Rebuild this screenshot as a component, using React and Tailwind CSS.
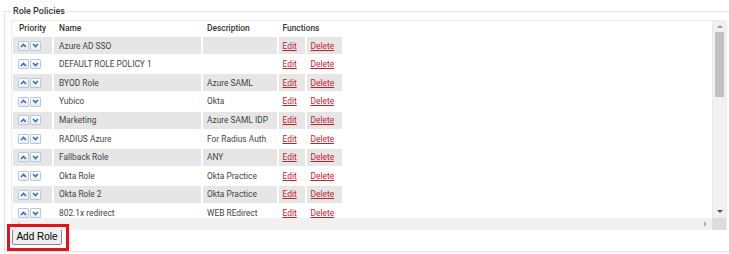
import React from 'react';

const roles = [
    { name: 'Azure AD SSO', desc: '' },
    { name: 'DEFAULT ROLE POLICY 1', desc: '' },
    { name: 'BYOD Role', desc: 'Azure SAML' },
    { name: 'Yubico', desc: 'Okta' },
    { name: 'Marketing', desc: 'Azure SAML IDP' },
    { name: 'RADIUS Azure', desc: 'For Radius Auth' },
    { name: 'Fallback Role', desc: 'ANY' },
    { name: 'Okta Role', desc: 'Okta Practice' },
    { name: 'Okta Role 2', desc: 'Okta Practice' },
    { name: '802.1x redirect', desc: 'WEB REdirect' },
];

const Chevron = ({ up }) => (
    <svg width="7" height="5" viewBox="0 0 7 5">
        <polyline
            points={up ? '1,4 3.5,1.5 6,4' : '1,1 3.5,3.5 6,1'}
            fill="none"
            stroke="#2f6fc4"
            strokeWidth="1.6"
        />
    </svg>
);

const MoveButton = ({ up }) => (
    <span className="w-[11px] h-[10px] flex items-center justify-center border border-[#b9c9da] bg-gradient-to-b from-white to-[#e9eef4] rounded-[1px]">
        <Chevron up={up} />
    </span>
);

const RoleRow = ({ role, index }) => {
    const cell = index % 2 === 0 ? 'bg-[#e6e6e6]' : 'bg-white';
    return (
        <div className="flex gap-[2px] h-[17px] shrink-0">
            <div className={`${cell} w-[39px] flex items-center gap-[1px] pl-[5px]`}>
                <MoveButton up />
                <MoveButton />
            </div>
            <div className={`${cell} w-[147px] flex items-center pl-[5px] text-[#444]`}>{role.name}</div>
            <div className={`${cell} w-[74px] flex items-center pl-[4px] text-[#444]`}>{role.desc}</div>
            <div className={`${cell} w-[26px] flex items-center pl-[3.5px]`}>
                <span className="text-[#c3202b] underline underline-offset-[1px]">Edit</span>
            </div>
            <div className={`${cell} w-[35px] flex items-center pl-[3.5px]`}>
                <span className="text-[#c3202b] underline underline-offset-[1px]">Delete</span>
            </div>
        </div>
    );
};

const App = () => {
    return (
        <div className="w-[729px] h-[254px] bg-white overflow-hidden relative" style={{ fontFamily: 'Roboto, "Liberation Sans", sans-serif' }}>
            <fieldset className="ml-[4px] mt-[5px] w-[730px] h-[247px] border border-r-0 border-[#e3e3e3] pl-[6px]">
                <legend className="px-[2px] text-[9px] leading-[12px] font-medium text-[#333]">Role Policies</legend>

                <div className="mt-[3px] w-[716px] border border-b-0 border-[#ececec]">
                    <div className="flex h-[197px]">
                        <div className="w-[700px] pl-[1px] overflow-hidden text-[8.4px] leading-none">
                            <div className="flex flex-col gap-[1.6px]">
                                <div className="flex gap-[2px] h-[14.7px] shrink-0 items-center font-medium text-[#333]">
                                    <div className="w-[39px] pl-[6px]">Priority</div>
                                    <div className="w-[147px] pl-[5px]">Name</div>
                                    <div className="w-[74px] pl-[4px]">Description</div>
                                    <div className="w-[63px] pl-[3.5px]">Functions</div>
                                </div>
                                {roles.map((role, i) => (
                                    <RoleRow key={role.name} role={role} index={i} />
                                ))}
                            </div>
                        </div>
                        <div className="w-[14px] bg-[#f1f1f1] border-l border-[#e8e8e8] flex flex-col items-center">
                            <div className="h-[11px] flex items-center justify-center">
                                <span className="w-0 h-0 border-x-[3px] border-x-transparent border-b-[3px] border-b-[#9a9a9a]" />
                            </div>
                            <div className="w-[9px] h-[65px] bg-[#c1c1c1]" />
                            <div className="flex-1" />
                            <div className="h-[11px] flex items-center justify-center mb-[1px]">
                                <span className="w-0 h-0 border-x-[3px] border-x-transparent border-t-[3px] border-t-[#505050]" />
                            </div>
                        </div>
                    </div>
                    <div className="flex h-[12px]">
                        <div className="w-[700px] bg-[#f1f1f1] flex items-center justify-between px-[5px]">
                            <span className="w-0 h-0 border-y-[3px] border-y-transparent border-r-[3px] border-r-[#d0d0d0]" />
                            <span className="w-0 h-0 border-y-[3px] border-y-transparent border-l-[3px] border-l-[#b5b5b5]" />
                        </div>
                        <div className="w-[14px] bg-[#dcdcdc]" />
                    </div>
                </div>

                <button className="block -mt-[1px] ml-[1px] w-[50px] h-[16px] bg-[#efefef] border border-[#8a8a8a] rounded-[2px] text-[10px] leading-none text-black" style={{ fontFamily: '"Liberation Sans", Arial, sans-serif' }}>
                    Add Role
                </button>
            </fieldset>

            <div className="absolute left-[7px] top-[224px] w-[62px] h-[27px] border-[3px] border-[#e3131b]" />
        </div>
    );
};

export default App;
